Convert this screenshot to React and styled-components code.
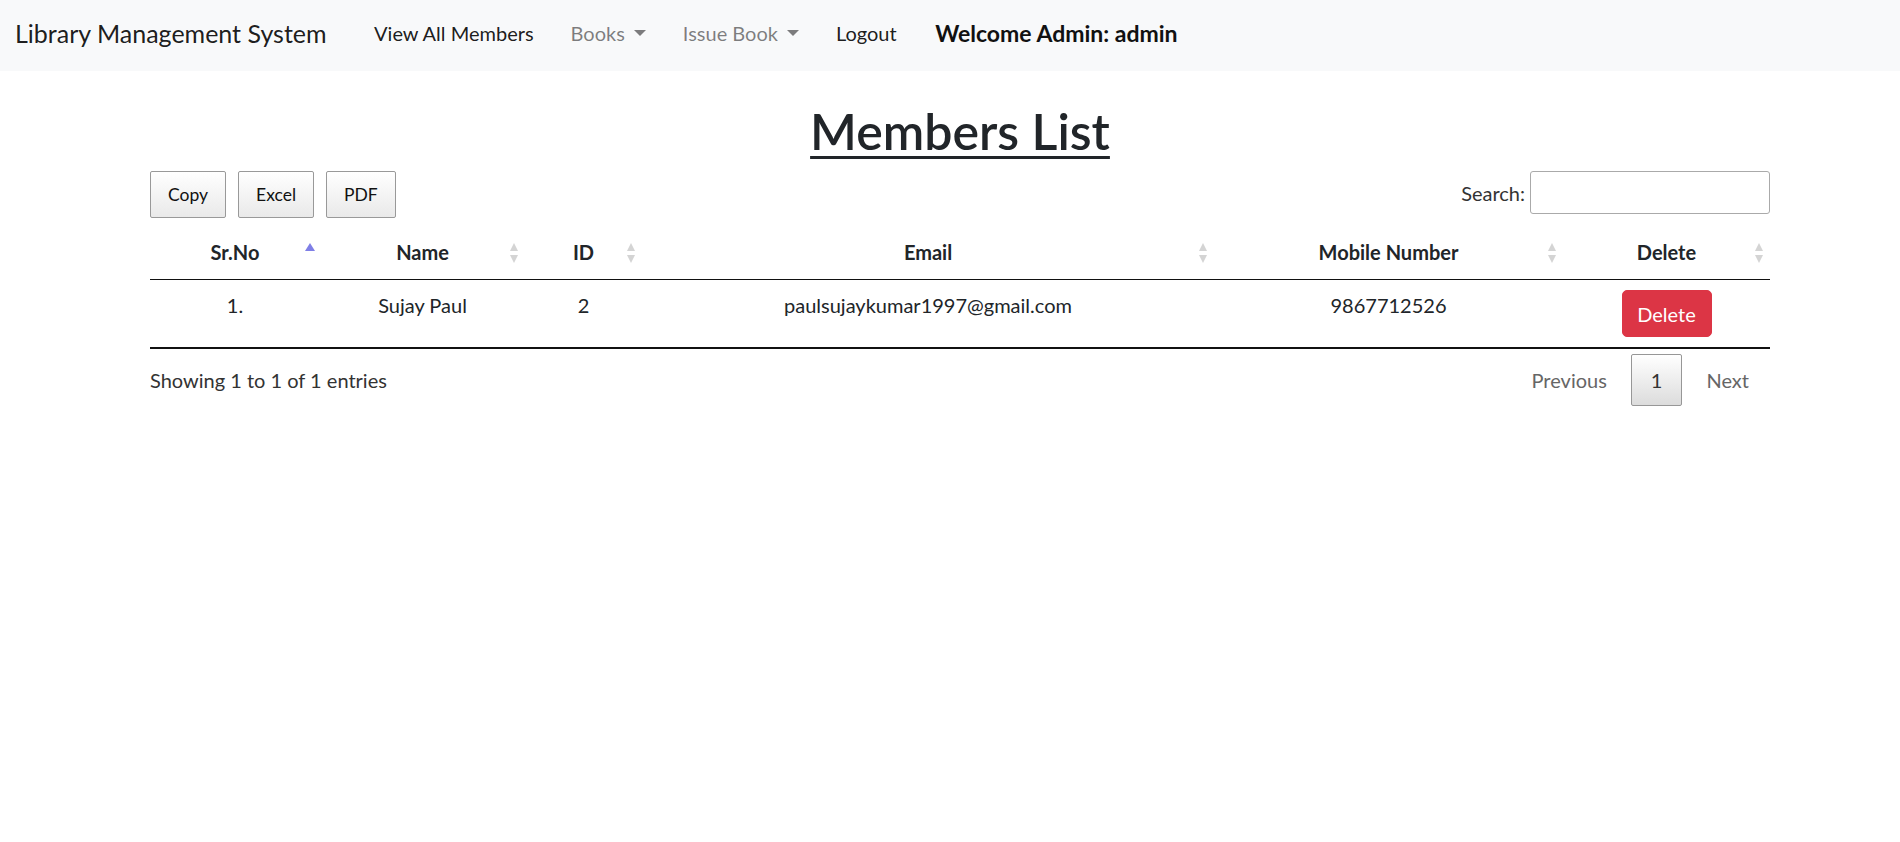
import React from 'react';
import styled, { createGlobalStyle } from 'styled-components';

const GlobalStyle = createGlobalStyle`
  body {
    margin: 0;
    background: #fff;
    font-family: 'Lato', 'Open Sans', sans-serif;
    color: #212529;
  }
`;

const members = [
  { sr: '1.', name: 'Sujay Paul', id: '2', email: 'paulsujaykumar1997@gmail.com', mobile: '9867712526' },
];

const columns = [
  { label: 'Sr.No', width: 170, sort: 'asc' },
  { label: 'Name', width: 205, sort: 'both' },
  { label: 'ID', width: 117, sort: 'both' },
  { label: 'Email', width: 572, sort: 'both' },
  { label: 'Mobile Number', width: 349, sort: 'both' },
  { label: 'Delete', width: 207, sort: 'both' },
];

const Navbar = styled.nav`
  display: flex;
  align-items: center;
  box-sizing: border-box;
  height: 71px;
  padding: 0 15px 5px;
  background: #f8f9fa;
`;

const Brand = styled.a`
  font-size: 25px;
  color: rgba(0, 0, 0, 0.9);
  margin-right: 29px;
  white-space: nowrap;
`;

const NavLink = styled.a`
  display: flex;
  align-items: center;
  padding: 0 18.5px;
  font-size: 20px;
  color: ${p => (p.muted ? 'rgba(0, 0, 0, 0.5)' : 'rgba(0, 0, 0, 0.9)')};
  white-space: nowrap;
`;

const Caret = styled.span`
  display: inline-block;
  margin-left: 9px;
  border-top: 6px solid rgba(0, 0, 0, 0.5);
  border-left: 6px solid transparent;
  border-right: 6px solid transparent;
`;

const Welcome = styled.span`
  margin-left: 20px;
  font-size: 23px;
  font-weight: 700;
  color: #111;
`;

const Container = styled.main`
  width: 1620px;
  margin-left: 150px;
`;

const Title = styled.h1`
  margin: 30px 0 10px;
  text-align: center;
  font-size: 50px;
  line-height: 60px;
  font-weight: 600;
  color: #212529;
  text-decoration: underline;
  text-decoration-thickness: 3px;
  text-underline-offset: 6px;
`;

const Toolbar = styled.div`
  display: flex;
  justify-content: space-between;
  align-items: flex-start;
  height: 54px;
`;

const ButtonGroup = styled.div`
  display: flex;
  gap: 12px;
`;

const ExportButton = styled.button`
  height: 47px;
  padding: 0 17px;
  font-family: inherit;
  font-size: 17.5px;
  color: #111;
  border: 1px solid #999;
  border-radius: 2px;
  background: linear-gradient(to bottom, #ffffff 0%, #e9e9e9 100%);
`;

const SearchLabel = styled.label`
  display: flex;
  align-items: center;
  gap: 5px;
  font-size: 20px;
  color: #333;
`;

const SearchInput = styled.input`
  width: 240px;
  height: 43px;
  box-sizing: border-box;
  border: 1px solid #aaa;
  border-radius: 3px;
  padding: 0 6px;
`;

const Table = styled.table`
  width: 100%;
  border-collapse: collapse;
  table-layout: fixed;
  border-bottom: 2px solid #111;
`;

const Th = styled.th`
  position: relative;
  padding: 12px;
  font-size: 20px;
  line-height: 30px;
  font-weight: 700;
  color: #212529;
  text-align: center;
  border-bottom: 1px solid #111;
`;

const SortIcon = styled.svg`
  position: absolute;
  right: ${p => (p.asc ? '3px' : '6px')};
  top: 17px;
`;

const Td = styled.td`
  padding: 10px;
  font-size: 20px;
  line-height: 30px;
  text-align: center;
  vertical-align: top;
  color: #212529;
`;

const DeleteButton = styled.button`
  width: 90px;
  height: 47px;
  font-family: inherit;
  font-size: 20px;
  color: #fff;
  background: #dc3545;
  border: 1px solid #dc3545;
  border-radius: 5px;
`;

const Footer = styled.div`
  display: flex;
  justify-content: space-between;
  align-items: center;
  margin-top: 5px;
`;

const Info = styled.div`
  font-size: 20px;
  color: #333;
`;

const Pagination = styled.div`
  display: flex;
  align-items: center;
  gap: 3px;
`;

const PageButton = styled.span`
  display: flex;
  align-items: center;
  box-sizing: border-box;
  height: 52px;
  padding: 0 ${p => (p.current ? '19px' : '20px')};
  font-size: 20px;
  color: ${p => (p.current ? '#333' : '#666')};
  border: 1px solid ${p => (p.current ? '#979797' : 'transparent')};
  border-radius: 2px;
  background: ${p => (p.current ? 'linear-gradient(to bottom, #fff 0%, #dcdcdc 100%)' : 'transparent')};
`;

const SortArrows = ({ sort }) =>
  sort === 'asc' ? (
    <SortIcon asc width="14" height="12" viewBox="0 0 14 12">
      <path d="M7 1 L12 9 L2 9 Z" fill="#7f7fe6" />
    </SortIcon>
  ) : (
    <SortIcon width="10" height="22" viewBox="0 0 10 22">
      <path d="M5 1 L9 9 L1 9 Z" fill="#d4d4d4" />
      <path d="M5 21 L9 13 L1 13 Z" fill="#d4d4d4" />
    </SortIcon>
  );

export default function App() {
  return (
    <>
      <GlobalStyle />
      <Navbar>
        <Brand>Library Management System</Brand>
        <NavLink>View All Members</NavLink>
        <NavLink muted>
          Books
          <Caret />
        </NavLink>
        <NavLink muted>
          Issue Book
          <Caret />
        </NavLink>
        <NavLink>Logout</NavLink>
        <Welcome>Welcome Admin: admin</Welcome>
      </Navbar>
      <Container>
        <Title>Members List</Title>
        <Toolbar>
          <ButtonGroup>
            <ExportButton>Copy</ExportButton>
            <ExportButton>Excel</ExportButton>
            <ExportButton>PDF</ExportButton>
          </ButtonGroup>
          <SearchLabel>
            Search:
            <SearchInput type="search" />
          </SearchLabel>
        </Toolbar>
        <Table>
          <colgroup>
            {columns.map(c => (
              <col key={c.label} style={{ width: c.width }} />
            ))}
          </colgroup>
          <thead>
            <tr>
              {columns.map(c => (
                <Th key={c.label}>
                  {c.label}
                  <SortArrows sort={c.sort} />
                </Th>
              ))}
            </tr>
          </thead>
          <tbody>
            {members.map(m => (
              <tr key={m.id}>
                <Td>{m.sr}</Td>
                <Td>{m.name}</Td>
                <Td>{m.id}</Td>
                <Td>{m.email}</Td>
                <Td>{m.mobile}</Td>
                <Td>
                  <DeleteButton>Delete</DeleteButton>
                </Td>
              </tr>
            ))}
          </tbody>
        </Table>
        <Footer>
          <Info>Showing 1 to 1 of 1 entries</Info>
          <Pagination>
            <PageButton>Previous</PageButton>
            <PageButton current>1</PageButton>
            <PageButton>Next</PageButton>
          </Pagination>
        </Footer>
      </Container>
    </>
  );
}
